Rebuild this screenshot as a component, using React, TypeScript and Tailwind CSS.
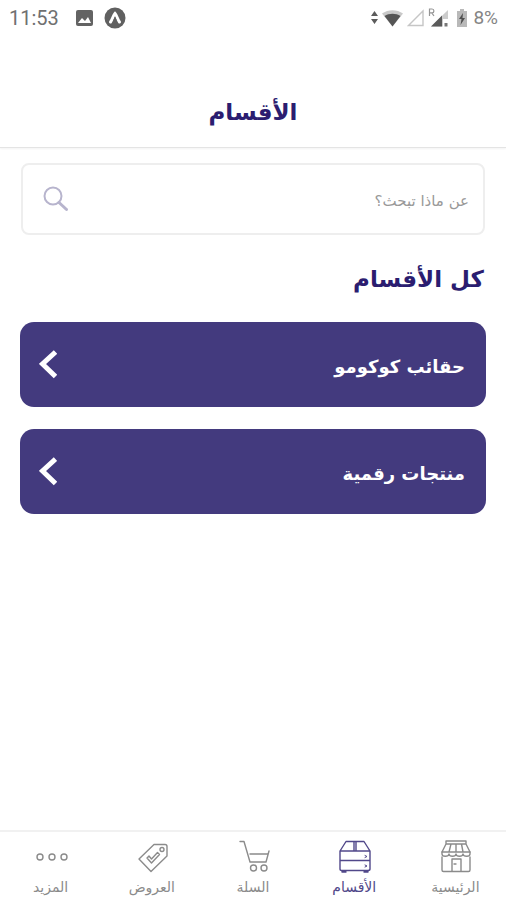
import { useState } from 'react'
import type { ReactNode } from 'react'

const categories = ['حقائب كوكومو', 'منتجات رقمية']

function StatusBar() {
  return (
    <div dir="ltr" className="flex h-9 items-center justify-between pl-[9px] pr-2 font-['Roboto',sans-serif] text-[#707070]">
      <div className="flex items-center">
        <span className="w-[50px] text-[20px] leading-6">11:53</span>
        <svg className="ml-[17px]" width="17" height="16" viewBox="0 0 17 16">
          <rect width="17" height="16" rx="2" fill="#636363" />
          <path d="M2 13l4-5 3 3 3-4 3 6z" fill="#fff" />
        </svg>
        <svg className="ml-[11px]" width="22" height="22" viewBox="0 0 22 22" fill="none">
          <circle cx="11" cy="11" r="10.5" fill="#606060" />
          <path d="M6.500 15C8.300 12.500 9.300 8.500 11 6.500c1.700 2 2.700 6 4.500 8.500" stroke="#fff" strokeWidth="3" strokeLinecap="round" />
          <path d="M9.500 13L11 9l1.500 4z" fill="#606060" />
        </svg>
      </div>
      <div className="flex items-center">
        <svg width="7" height="16" viewBox="0 0 7 16" fill="#5c5c5c">
          <path d="M0 6l3.500-5L7 6zM0 9h7l-3.500 5z" />
        </svg>
        <svg className="ml-1" width="21" height="18" viewBox="0 0 21 18">
          <path d="M0 4.500C6 0 15 0 21 4.500L10.500 17.500z" fill="#c9c9c9" />
          <path d="M2.500 7C7 4 14 4 18.500 7l-8 10.500z" fill="#555" />
        </svg>
        <svg className="ml-1" width="17" height="18" viewBox="0 0 17 18">
          <path d="M1.500 16.500H16V2z" fill="none" stroke="#c6c6c6" strokeWidth="1.400" />
        </svg>
        <svg className="ml-1" width="21" height="22" viewBox="0 0 21 22">
          <path d="M1.500 9V2h2.500a1.800 1.800 0 010 3.800H1.500M3.800 5.800L6 9" fill="none" stroke="#959595" strokeWidth="1.200" />
          <path d="M3 19.500L20 3v9h-5v7.500z" fill="#ccc" />
          <path d="M3 19.500L14 8.500v11z" fill="#5a5a5a" />
          <path d="M16.500 16h3v3.500h-3z" fill="#777" />
        </svg>
        <svg className="ml-[7px]" width="12" height="20" viewBox="0 0 12 20">
          <path d="M1 3h3V1h4v2h3v16H1z" fill="#b9b9b9" />
          <path d="M7 5L3 11h2.500L4.500 17 9 10H6.500z" fill="#505050" />
        </svg>
        <span className="ml-[5px] text-[19px] leading-6 text-[#858585]">8%</span>
      </div>
    </div>
  )
}

function SearchIcon() {
  return (
    <svg width="26" height="26" viewBox="0 0 26 26" fill="none" stroke="#b7b4cd">
      <circle cx="10" cy="10" r="8.500" strokeWidth="2" />
      <path d="M16 16.500l7.500 7" strokeWidth="3" strokeLinecap="round" />
    </svg>
  )
}

function ChevronIcon() {
  return (
    <svg width="18" height="30" viewBox="0 0 18 30" fill="none" stroke="#fff" strokeWidth="5">
      <path d="M16.500 2L3.500 14l13 12.500" />
    </svg>
  )
}

function NavIcon({ children }: { children: ReactNode }) {
  return (
    <svg width="34" height="34" viewBox="0 0 34 34" fill="none" stroke="currentColor" strokeWidth="1.400" strokeLinejoin="round" strokeLinecap="round">
      {children}
    </svg>
  )
}

const tabs = [
  {
    label: 'الرئيسية',
    icon: (
      <NavIcon>
        <path d="M8 2h20v3H8zM8 5L4 13M28 5l4 8M13 5l-2 8M18 5v8M23.500 5l1.500 8M4 13h28" />
        <path d="M4 13v2c0 3 6.500 3 7 0 .5 3 6.500 3 7 0 .5 3 6.500 3 7 0 .5 3 7 3 7 0v-2" />
        <path d="M4 18v13q0 1.500 1.500 1.500h25q1.500 0 1.500-1.500V18M14 32V20h9v12M16 25h2" />
      </NavIcon>
    ),
  },
  {
    label: 'الأقسام',
    icon: (
      <NavIcon>
        <path d="M3 12L9 2.500h18L33 12v18q0 1.500-2 1.500H5q-2 0-2-1.500zM3 12h30M3 21.500h30M17 3v8.500M19 3v8.500M5 32v1h4M31 32v1h-4" />
        <path d="M28 16.500l2 1-2 1M28 26l2 1-2 1" strokeWidth="1" />
      </NavIcon>
    ),
  },
  {
    label: 'السلة',
    icon: (
      <NavIcon>
        <path d="M4 2.500h4L14 23h16l3-11M14 15h17.500" />
        <circle cx="17.500" cy="29" r="3" />
        <circle cx="28" cy="29" r="3" />
      </NavIcon>
    ),
  },
  {
    label: 'العروض',
    icon: (
      <NavIcon>
        <path d="M19 5.500h11q2 0 2 2V17L16 32.500 4 20z" />
        <circle cx="27" cy="10.500" r="2" />
        <path d="M12 19l2-2 2.500 3 6-6.500 2 2-8 8.500z" />
      </NavIcon>
    ),
  },
  {
    label: 'المزيد',
    icon: (
      <NavIcon>
        <circle cx="6" cy="18" r="3" />
        <circle cx="18" cy="18" r="3" />
        <circle cx="30" cy="18" r="3" />
      </NavIcon>
    ),
  },
]

export default function App() {
  const [query, setQuery] = useState('')
  const [active, setActive] = useState(1)

  return (
    <div dir="rtl" className="flex min-h-screen flex-col bg-white font-['DejaVu_Sans',sans-serif] text-[#2b1d70]">
      <StatusBar />
      <header className="flex h-28 items-center justify-center border-b border-[#e4e4e4] pt-10 shadow-xs">
        <h1 className="text-[23px] leading-8 font-bold">الأقسام</h1>
      </header>

      <main className="flex-1 px-5 pt-[15px]">
        <label className="mx-px flex h-[72px] items-center rounded-lg border-2 border-[#eee] px-[14px]">
          <input
            type="text"
            aria-label="بحث"
            placeholder="عن ماذا تبحث؟"
            value={query}
            onChange={e => setQuery(e.target.value)}
            className="min-w-0 flex-1 bg-transparent pt-1 text-[15px] leading-6 outline-none placeholder:text-[#999]"
          />
          <span className="px-[6px]">
            <SearchIcon />
          </span>
        </label>

        <h2 className="mt-7 px-[2px] text-[23px] leading-8 font-bold">كل الأقسام</h2>

        <div className="mt-[27px] flex flex-col gap-[22px]">
          {categories.map(name => (
            <button key={name} className="flex h-[85px] w-full items-center justify-between rounded-[14px] bg-[#433a7e] pr-[21px] pl-[19px] text-white">
              <span className="pt-1 text-[18px] leading-8 font-bold">{name}</span>
              <ChevronIcon />
            </button>
          ))}
        </div>
      </main>

      <nav className="grid h-[70px] grid-cols-5 border-t-2 border-[#f1f1f1]">
        {tabs.map((tab, i) => (
          <button
            key={tab.label}
            onClick={() => setActive(i)}
            className={`flex flex-col items-center pt-[7px] text-[14px] leading-5 ${i === active ? 'text-[#51488a]' : 'text-[#8b8b8b]'}`}
          >
            {tab.icon}
            <span className="mt-1">{tab.label}</span>
          </button>
        ))}
      </nav>
    </div>
  )
}
